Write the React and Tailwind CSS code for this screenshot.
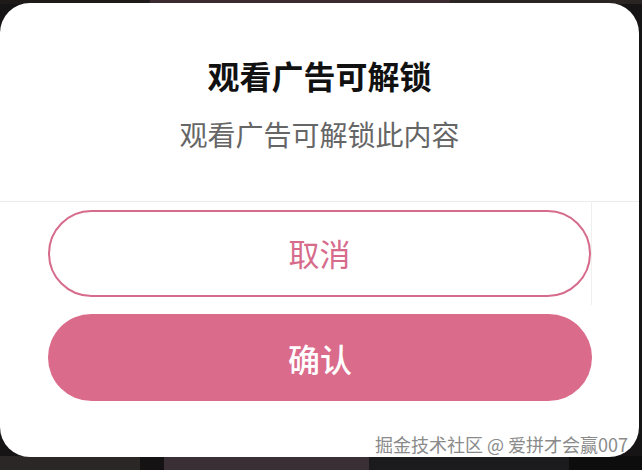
import React from 'react';

const pink = '#db6b8b';

const App = () => {
  return (
    <div
      className="relative w-[642px] h-[470px] overflow-hidden bg-[#161414]"
      style={{ fontFamily: '"Noto Sans CJK SC", "Noto Sans", sans-serif' }}
    >
      {/* video frames peeking behind the dialog */}
      <div className="absolute inset-x-0 bottom-0 h-[14px] flex">
        <div className="w-[140px] bg-[#2a2726]" />
        <div className="w-[24px] bg-[#141212]" />
        <div className="w-[205px] bg-[#3a2f34]" />
        <div className="w-[200px] bg-[#1b1a1c]" />
        <div className="flex-1 bg-[#0e0d0d]" />
      </div>
      <div className="absolute inset-x-0 top-0 h-[4px] flex">
        <div className="w-[150px] bg-[#1d1a19]" />
        <div className="w-[300px] bg-[#3b2a30]" />
        <div className="flex-1 bg-[#2a2522]" />
      </div>

      {/* dialog */}
      <div className="absolute left-0 top-[3px] w-[639px] h-[454px] bg-white rounded-[30px] flex flex-col">
        <div className="h-[199px] flex flex-col items-center border-b border-[#ececec]">
          <h2 className="mt-[52px] text-[32px] leading-[40px] font-bold text-[#111]">观看广告可解锁</h2>
          <p className="mt-[19px] text-[28px] leading-[40px] text-[#666]">观看广告可解锁此内容</p>
        </div>

        <div className="w-[592px] pl-[48px] pt-[8px] pb-[8px] border-r border-[#f0f0f0]">
          <button className="w-full h-[87px] rounded-full border-2 border-[#d66b8c] flex items-center justify-center">
            <span className="text-[31px] text-[#d66b8c]">取消</span>
          </button>
        </div>

        <div className="pl-[48px] pr-[47px] pt-[9px]">
          <button
            className="w-full h-[87px] rounded-full flex items-center justify-center"
            style={{ backgroundColor: pink }}
          >
            <span className="text-[32px] font-medium text-white">确认</span>
          </button>
        </div>

        <div className="mt-auto mb-[1px] pr-[11px] flex justify-end">
          <span
            className="text-[18px] leading-[24px] text-[#8a8a8a]"
            style={{ textShadow: '0 0 1px #fff, 1px 1px 0 #fff, -1px -1px 0 #fff' }}
          >
            掘金技术社区 @ 爱拼才会赢007
          </span>
        </div>
      </div>
    </div>
  );
};

export default App;
